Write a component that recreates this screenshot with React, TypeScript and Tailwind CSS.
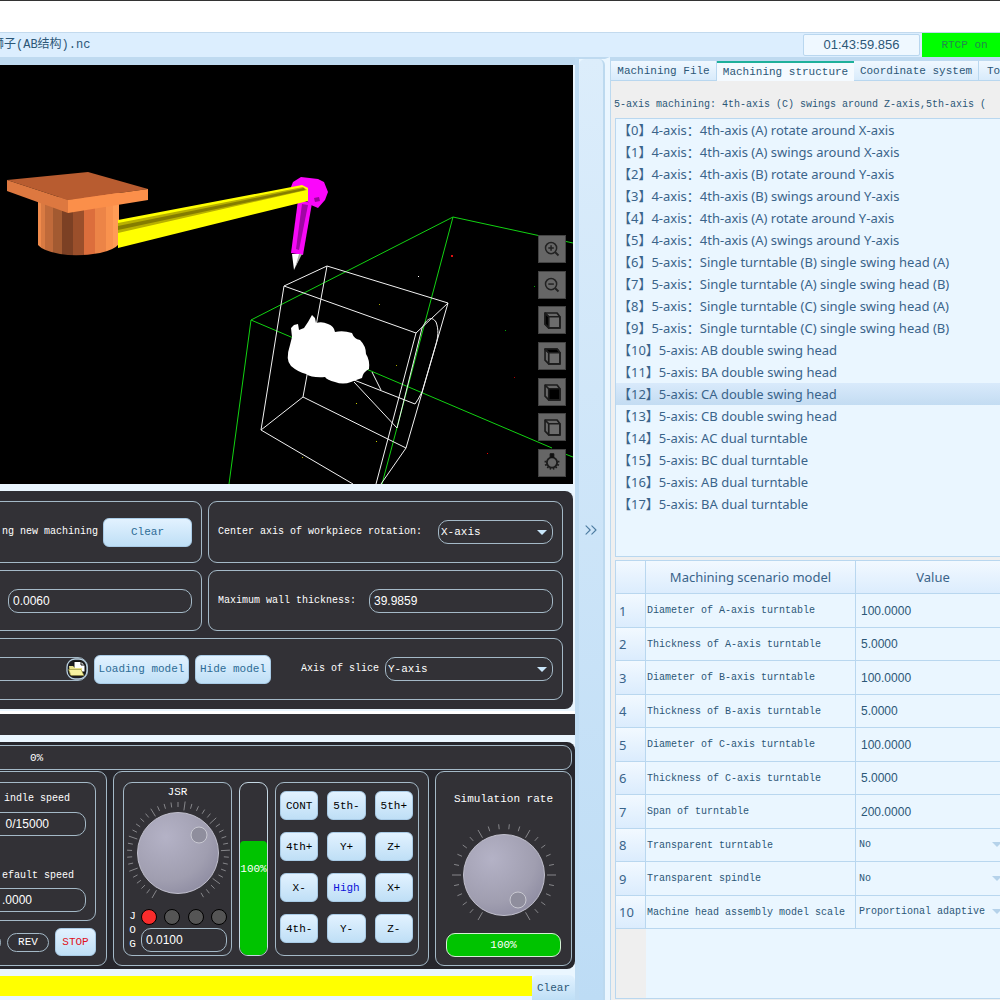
import React from "react";
import { ChevronsRight } from "lucide-react";

const structures = [
  "【0】4-axis：4th-axis (A) rotate around X-axis",
  "【1】4-axis：4th-axis (A) swings around X-axis",
  "【2】4-axis：4th-axis (B) rotate around Y-axis",
  "【3】4-axis：4th-axis (B) swings around Y-axis",
  "【4】4-axis：4th-axis (A) rotate around Y-axis",
  "【5】4-axis：4th-axis (A) swings around Y-axis",
  "【6】5-axis：Single turntable (B) single swing head (A)",
  "【7】5-axis：Single turntable (A) single swing head (B)",
  "【8】5-axis：Single turntable (C) single swing head (A)",
  "【9】5-axis：Single turntable (C) single swing head (B)",
  "【10】5-axis: AB double swing head",
  "【11】5-axis: BA double swing head",
  "【12】5-axis: CA double swing head",
  "【13】5-axis: CB double swing head",
  "【14】5-axis: AC dual turntable",
  "【15】5-axis: BC dual turntable",
  "【16】5-axis: AB dual turntable",
  "【17】5-axis: BA dual turntable",
];

const params: { name: string; value: string; choice?: boolean }[] = [
  { name: "Diameter of A-axis turntable", value: "100.0000" },
  { name: "Thickness of A-axis turntable", value: "5.0000" },
  { name: "Diameter of B-axis turntable", value: "100.0000" },
  { name: "Thickness of B-axis turntable", value: "5.0000" },
  { name: "Diameter of C-axis turntable", value: "100.0000" },
  { name: "Thickness of C-axis turntable", value: "5.0000" },
  { name: "Span of turntable", value: "200.0000" },
  { name: "Transparent turntable", value: "No", choice: true },
  { name: "Transparent spindle", value: "No", choice: true },
  { name: "Machine head assembly model scale", value: "Proportional adaptive", choice: true },
];

const jogKeys = ["CONT", "5th-", "5th+", "4th+", "Y+", "Z+", "X-", "High", "X+", "4th-", "Y-", "Z-"];

function Dial({ steps, handleX, handleY }: { steps: number; handleX: number; handleY: number }) {
  const ticks = Array.from({ length: steps + 1 }, (_, i) => {
    const a = ((240 - (300 / steps) * i) * Math.PI) / 180;
    const major = i % 5 === 0;
    const r1 = major ? 43 : 46;
    const r2 = major ? 52 : 51;
    return (
      <line
        key={i}
        x1={54 + r1 * Math.cos(a)}
        y1={54 - r1 * Math.sin(a)}
        x2={54 + r2 * Math.cos(a)}
        y2={54 - r2 * Math.sin(a)}
        stroke="#86868a"
        strokeWidth="1"
      />
    );
  });
  return (
    <svg viewBox="0 0 108 108" className="h-[108px] w-[108px] shrink-0" aria-hidden="true">
      <defs>
        <radialGradient id={`dial${steps}`} cx="0.35" cy="0.3" r="0.9">
          <stop offset="0" stopColor="#b4b2c6" />
          <stop offset="0.6" stopColor="#a09eb0" />
          <stop offset="1" stopColor="#85839a" />
        </radialGradient>
      </defs>
      {ticks}
      <circle cx="54" cy="54" r="40.5" fill={`url(#dial${steps})`} stroke="#c0bfcc" strokeWidth="1" />
      <circle cx={handleX} cy={handleY} r="8" fill="#8f8e9d" stroke="#c9c9d2" strokeWidth="1" />
    </svg>
  );
}

function Scene() {
  const strips = [
    ["#f08b4c", 38, 41], ["#d97a42", 41, 45], ["#c06a3a", 45, 53], ["#a35a31", 53, 62], ["#7c4024", 62, 73],
    ["#9b4f2b", 73, 84], ["#dc6e3c", 84, 95], ["#ec8447", 95, 106], ["#f9924e", 106, 113], ["#ff9c56", 113, 119],
  ] as const;
  const dots = [
    [418, 276, "#fff"], [379, 304, "#aa0"], [505, 330, "#0a0"], [396, 365, "#aa0"], [356, 403, "#cc0"],
    [376, 441, "#cc0"], [302, 457, "#aa0"], [487, 453, "#e00"], [514, 377, "#a00"], [534, 286, "#0a0"],
  ] as const;
  return (
    <svg viewBox="0 65 573 419" preserveAspectRatio="xMaxYMin slice" className="block h-full w-full" aria-label="Machine preview">
      <g fill="none" stroke="#12d212">
        <path d="M229 484 251 320 453 217 573 243" />
        <path d="M251 320 552 448M565 454 573 457M453 217 382 484" />
      </g>
      <g fill="none" stroke="#f2f2f2">
        <path d="M284 286 327 266 448 303 416 333ZM284 286 261 430 353 484M327 266 303 397 261 430M303 397 406 448 448 303M416 333 376 484M406 448 381 484" />
        <path d="M397 428 422 328C427 318 432 316 436 322C439 330 438 337 436 344L422 392Q418 400 415 404L354 380M372 372 381 390M354 382 397 428" />
      </g>
      <path d="M290 345 292 337 291 328 294 325 298 324 299 330 304 328 308 322 312 315 315 318 316 323Q322 321 328 324Q334 326 335 332Q343 330 352 333Q354 339 360 340Q366 346 366 354Q370 360 369 369Q363 372 362 378Q356 380 351 382Q343 385 335 382Q327 380 325 377Q312 378 306 374Q298 372 291 366Q285 360 290 345Z" fill="#fff" />
      <clipPath id="post"><path d="M38 200V245Q43 251 60 254Q78 257 100 253Q114 250 119 244V190Z" /></clipPath>
      <g clipPath="url(#post)">
        {strips.map(([c, a, b]) => <rect key={a} x={a} y="190" width={b - a} height="68" fill={c} />)}
      </g>
      <path d="M7 180 88 172 148 189 68 200Z" fill="#b85c30" />
      <path d="M7 180 68 200V213L7 191Z" fill="#dd7840" />
      <path d="M68 200 148 189V200L68 213Z" fill="#fb8f4a" />
      <path d="M291 187 293 182 301 177 318 179 324 182 328 192 325 200 318 208 311 205 306 200 296 199Z" fill="#fb06fb" />
      <path d="M298 200 312 203 303 255 291 253Z" fill="#f808f8" />
      <path d="M302 204 308 205 299 250 296 249Z" fill="#a006a4" />
      <path d="M314 198 319 197 320 201 315 202Z" fill="#9a059a" />
      <path d="M292 254H301L294 270Z" fill="#fff" />
      <path d="M299 254H302L295 268Z" fill="#aaa" />
      <path d="M118 220 302 185 308 188V201L118 248Z" fill="#ffff00" />
      <path d="M118 223 303 187 307 190 118 233Z" fill="#b8b000" />
      <path d="M118 226 304 188 305 190 118 230Z" fill="#857d00" />
      {dots.map(([x, y, c]) => <rect key={x} x={x} y={y} width="1" height="1" fill={c} />)}
      <rect x="451" y="255" width="2" height="2" fill="#e01010" />
    </svg>
  );
}

function CubeIcon({ face }: { face: "left" | "top" | "front" | "none" }) {
  return (
    <svg viewBox="0 0 28 28" className="h-full w-full" fill="none" stroke="#1c1c1c" strokeWidth="1.8" strokeLinejoin="round">
      <path d="M6.5 6.5H19.5L22.5 10.5V22.5H10.5L6.5 18.5Z" fill="#686868" />
      {face === "left" && <path d="M6.5 6.5 10.5 10.5V22.5L6.5 18.5Z" fill="#000" />}
      {face === "top" && <path d="M6.5 6.5H19.5L22.5 10.5H10.5Z" fill="#000" />}
      <path d="M10.5 10.5H22.5V22.5H10.5Z" fill={face === "front" ? "#000" : "#6c6c6c"} />
      <path d="M6.5 6.5 10.5 10.5" />
    </svg>
  );
}

function ZoomIcon({ plus }: { plus: boolean }) {
  return (
    <svg viewBox="0 0 28 28" className="h-full w-full" fill="none" stroke="#222" strokeWidth="1.6">
      <circle cx="13" cy="13" r="6" />
      <path d="M17.5 17.5 21 21" strokeWidth="2" />
      <path d={plus ? "M10 13H16M13 10V16" : "M10 13H16"} />
    </svg>
  );
}

function LampIcon() {
  return (
    <svg viewBox="0 0 28 28" className="h-full w-full" fill="none" stroke="#1c1c1c" strokeWidth="2">
      <circle cx="14" cy="13.5" r="5.5" />
      <path d="M6 12.5H8M6.5 16.5 8.5 15.5M9 19.5 10 18M12 21 12.5 19.5M16 21 15.5 19.5M19 19.5 18 18M21.5 16.5 19.5 15.5M22 12.5H20" strokeWidth="1.8" />
      <path d="M12 4H16V8H12Z" fill="#111" stroke="#111" strokeWidth="1" />
    </svg>
  );
}

function FolderIcon() {
  return (
    <svg viewBox="0 0 22 22" className="h-[22px] w-[22px]">
      <rect x="1" y="1" width="20" height="20" rx="8" fill="#1c1c20" stroke="#b9d0e0" strokeWidth="1.3" />
      <path d="M8 3.5H15L19 7V14H8Z" fill="#fff" stroke="#111" />
      <path d="M15 3.5V7H19" fill="none" stroke="#111" />
      <path d="M3 8H7L9 10H16V17H4Z" fill="#e8e08a" />
      <path d="M2.5 11.5H15L18 17.5H5Z" fill="#f7f2a0" stroke="#8a8430" strokeWidth="0.6" />
    </svg>
  );
}

function Caret({ className }: { className: string }) {
  return (
    <svg viewBox="0 0 10 5" className={className} aria-hidden="true">
      <path d="M0 0H10L5 5Z" fill="currentColor" />
    </svg>
  );
}

const box = "rounded-[9px] border border-[#a4b9c7] bg-[#323136]";
const lightButton = "rounded-md border border-[#a9cbe6] bg-linear-to-b from-[#e2f2ff] to-[#bfdff6]";
const field = "rounded-[10px] border border-[#a4b9c7] bg-[#323136] text-white outline-none";
const pill = "h-[19px] w-[42px] shrink-0 rounded-full border border-[#a4b9c7]";
const digits = "font-['Liberation_Sans',sans-serif] text-[12px]";

function DarkSelect({ id, value, className }: { id: string; value: string; className: string }) {
  return (
    <div className={`relative shrink-0 ${className}`}>
      <select id={id} defaultValue={value} className={`block h-6 w-full appearance-none pl-[2px] ${field}`}>
        <option>X-axis</option>
        <option>Y-axis</option>
        <option>Z-axis</option>
      </select>
      <Caret className="pointer-events-none absolute top-[10px] right-[6px] h-[5px] w-[10px] text-[#c9e6fa]" />
    </div>
  );
}

export default function App() {
  return (
    <div className="flex min-h-screen flex-col overflow-hidden bg-[#eaf6ff] font-['Liberation_Mono','Noto_Sans_CJK_SC',monospace] text-[11px] leading-4 whitespace-nowrap text-[#2c5777]">
      <div className="h-8 border-t border-[#333] bg-white" />
      <header className="flex h-[25px] items-center border-t border-[#c3daee] bg-[#dceefe]">
        <div className="-ml-2 flex-1 text-[12px]">狮子(AB结构).nc</div>
        <div className="flex h-[22px] w-[117px] items-center justify-center rounded-xs border border-[#b9d7ef] bg-[#eff8ff] font-['Liberation_Sans',sans-serif] text-[13px]">01:43:59.856</div>
        <button className="-mr-[7px] ml-[2px] h-full w-[85px] bg-[#00ff00] text-[#228a4c]">RTCP on</button>
      </header>

      <div className="flex flex-1">
        <main className="flex min-w-0 flex-1 flex-col">
          <div className="h-2 bg-[#bfdaf0]" />
          <section className="relative mr-[2px] h-[419px] overflow-hidden bg-black">
            <Scene />
            <div className="absolute top-[170px] right-[7px] bottom-[7px] flex w-7 flex-col justify-between">
              {[
                ["Zoom in", <ZoomIcon plus />], ["Zoom out", <ZoomIcon plus={false} />],
                ["Left view", <CubeIcon face="left" />], ["Top view", <CubeIcon face="top" />],
                ["Front view", <CubeIcon face="front" />], ["Isometric view", <CubeIcon face="none" />],
                ["Light", <LampIcon />],
              ].map(([label, icon]) => (
                <button key={label as string} aria-label={label as string} className="h-7 w-7 border border-[#444] bg-[#666]">
                  {icon}
                </button>
              ))}
            </div>
          </section>

          <section className="mt-[7px] mr-[2px] grid grid-cols-[202px_minmax(0,1fr)] gap-x-[6px] gap-y-[7px] rounded-r-lg bg-[#2f2e34] pt-[10px] pr-[10px] pb-[9px] text-white">
            <div className={`-ml-3 flex h-[62px] items-center justify-end gap-[5px] pr-[9px] ${box}`}>
              <span className="text-[10px]">ng new machining</span>
              <button className={`h-[29px] w-[89px] text-[#2d6c96] ${lightButton}`}>Clear</button>
            </div>
            <div className={`flex h-[62px] items-center px-[9px] ${box}`}>
              <label htmlFor="rotation" className="flex-1 text-[10px]">Center axis of workpiece rotation:</label>
              <DarkSelect id="rotation" value="X-axis" className="w-[115px]" />
            </div>
            <div className={`-ml-3 flex h-[61px] items-center justify-end pr-[9px] ${box}`}>
              <input aria-label="Precision" defaultValue="0.0060" className={`h-6 w-[184px] px-1 ${digits} ${field}`} />
            </div>
            <div className={`flex h-[61px] items-center justify-between px-[9px] ${box}`}>
              <label htmlFor="wall" className="text-[10px]">Maximum wall thickness:</label>
              <input id="wall" defaultValue="39.9859" className={`h-6 w-[184px] px-1 ${digits} ${field}`} />
            </div>
            <div className={`col-span-2 -ml-3 flex h-[62px] items-center gap-[6px] pr-[9px] ${box}`}>
              <div className="relative w-[99px]">
                <input aria-label="Model file" className={`block h-6 w-full ${field}`} />
                <button aria-label="Open file" className="absolute top-px right-0 h-[22px] w-[22px]"><FolderIcon /></button>
              </div>
              <button className={`h-[29px] w-[95px] text-[#2d6c96] ${lightButton}`}>Loading model</button>
              <button className={`h-[29px] w-[76px] text-[#2d6c96] ${lightButton}`}>Hide model</button>
              <label htmlFor="slice" className="ml-auto text-[10px]">Axis of slice</label>
              <DarkSelect id="slice" value="Y-axis" className="w-[168px]" />
            </div>
          </section>

          <div className="mt-[2px] mb-[7px] h-[24px] border-t-[3px] border-white bg-[#323136]" />

          <section className="rounded-r-lg bg-[#26262c] pt-[3px] pr-[3px] pb-[3px] text-white">
            <div className={`-ml-3 flex h-[25px] items-center pl-[41px] ${box}`}>0%</div>
            <div className="mt-px flex gap-[6px]">
              <div className={`-ml-3 w-[119px] pt-[10px] pr-[10px] pb-[9px] ${box}`}>
                <div className={`h-[139px] pr-[9px] text-right ${box}`}>
                  <label htmlFor="spindle" className="mt-2 block pr-4 text-[10px]">indle speed</label>
                  <input id="spindle" readOnly defaultValue="0/15000" className={`mt-[5px] block h-6 w-full pr-9 text-right ${digits} ${field}`} />
                  <label htmlFor="default" className="mt-8 block pr-[12px] text-[10px]">efault speed</label>
                  <input id="default" defaultValue=".0000" className={`mt-1 block h-6 w-full pr-[53px] text-right ${digits} ${field}`} />
                </div>
                <div className="mt-[7px] flex items-center justify-end gap-[6px]">
                  <button aria-label="Forward" className={pill} />
                  <button className={pill}>REV</button>
                  <button className={`h-7 w-[41px] shrink-0 text-[#e01020] ${lightButton}`}>STOP</button>
                </div>
              </div>

              <div className={`flex flex-1 justify-between px-[9px] pt-[10px] pb-[9px] ${box}`}>
                <div className={`flex h-[174px] w-[109px] flex-col items-center ${box}`}>
                  <div className="mt-px h-4">JSR</div>
                  <div className="-mt-px"><Dial steps={38} handleX={75} handleY={36} /></div>
                  <div className="flex w-full flex-1 gap-1 px-1 pt-[2px]">
                    <div className="flex w-[9px] flex-col items-center leading-[14px]"><span>J</span><span>O</span><span>G</span></div>
                    <div className="flex w-[86px] flex-col gap-[3px]">
                      <div className="flex justify-between">
                        <i className="h-4 w-4 rounded-full border border-black bg-[#f92c2c]" />
                        <i className="h-4 w-4 rounded-full border border-black bg-[#555]" />
                        <i className="h-4 w-4 rounded-full border border-black bg-[#555]" />
                        <i className="h-4 w-4 rounded-full border border-black bg-[#555]" />
                      </div>
                      <input aria-label="Jog step" defaultValue="0.0100" className={`h-6 w-full px-1 ${digits} ${field}`} />
                    </div>
                  </div>
                </div>
                <div className="relative flex h-[174px] w-[29px] flex-col justify-end overflow-hidden rounded-[9px] border border-[#c5d8e4]">
                  <div className="h-[66%] rounded-t-sm bg-[#00c300]" />
                  <span className="absolute inset-0 flex items-center justify-center">100%</span>
                </div>
                <div className={`grid h-[174px] w-[144px] grid-cols-3 content-start gap-x-[9px] gap-y-3 pt-2 pr-[5px] pl-1 ${box}`}>
                  {jogKeys.map((k) => (
                    <button key={k} className={`h-[29px] ${k === "High" ? "text-[#0d12d8]" : "text-black"} ${lightButton}`}>{k}</button>
                  ))}
                </div>
              </div>

              <div className={`flex w-[137px] flex-col items-center ${box}`}>
                <div className="mt-[19px] mb-[14px] h-4">Simulation rate</div>
                <Dial steps={25} handleX={68} handleY={79} />
                <div className="mt-1 flex h-6 w-[115px] items-center justify-center rounded-[9px] border border-[#d5f0d5] bg-[#00c300]">100%</div>
              </div>
            </div>
          </section>

          <div className="mt-[6px] flex items-stretch">
            <div className="my-px h-5 flex-1 bg-[#ffff00]" />
            <button className="h-[25px] w-[43px] rounded-t-md bg-linear-to-b from-[#e2f2ff] to-[#bfdff6]">Clear</button>
          </div>
        </main>

        <aside className="flex w-[35px] flex-col border-t-2 border-r-[5px] border-l-4 border-t-[#bfdaf0] border-r-[#eaf6ff] border-l-[#bfdcf3]">
          <button aria-label="Collapse panel" className="flex flex-1 items-center justify-center rounded-t-md border-r-2 border-[#bcd9ef] bg-linear-to-b from-[#dcedfb] to-[#bddcf5]">
            <ChevronsRight className="h-5 w-5 text-[#4c7ba0]" strokeWidth={1.3} />
          </button>
        </aside>

        <section className="flex w-[390px] flex-col overflow-hidden border-t-4 border-l border-t-[#bfdaf0] border-l-[#bcd9ef] bg-[#efefef]">
          <div className="flex h-5 w-[430px]" role="tablist">
            <button role="tab" className="w-[106px] border-r border-b border-[#b9d7ef] bg-linear-to-b from-[#f0f8ff] to-[#d8ebfb]">Machining File</button>
            <button role="tab" aria-selected="true" className="w-[137px] border-t-2 border-[#1eb09b] bg-[#f4faff]">Machining structure</button>
            <button role="tab" className="w-[125px] border-r border-b border-[#b9d7ef] bg-linear-to-b from-[#f0f8ff] to-[#d8ebfb]">Coordinate system</button>
            <button role="tab" className="flex-1 border-b border-[#b9d7ef] bg-linear-to-b from-[#f0f8ff] to-[#d8ebfb] pl-2 text-left">Tool</button>
          </div>
          <p className="mt-4 mb-[5px] pl-[3px] text-[10px]">5-axis machining: 4th-axis (C) swings around Z-axis,5th-axis (</p>
          <ul className="ml-1 h-[439px] w-[400px] border border-[#b9d7ef] bg-[#eaf6ff] font-['Noto_Sans','Noto_Sans_CJK_SC',sans-serif] text-[13px] leading-[22px] text-[#3a648a]">
            {structures.map((s, i) => (
              <li key={s} className={`h-[22px] pl-[2px] ${i === 12 ? "bg-linear-to-b from-[#d9eafb] to-[#c3dcf2]" : ""}`}>{s}</li>
            ))}
          </ul>
          <div className="mt-[3px] mb-px ml-1 flex w-[400px] flex-1 flex-col border border-[#b9d7ef] bg-[#eaf6ff]">
            <table className="w-full table-fixed border-separate border-spacing-0 text-left">
              <colgroup><col className="w-[30px]" /><col className="w-[210px]" /><col /></colgroup>
              <thead className="bg-linear-to-b from-[#f2f9ff] to-[#dbecfd] font-['Noto_Sans',sans-serif] text-[13px] text-[#3a648a]">
                <tr className="h-[33px]">
                  <th className="border-r border-b border-[#b9d7ef]" aria-label="Row" />
                  <th className="border-r border-b border-[#b9d7ef] text-center font-normal">Machining scenario model</th>
                  <th className="border-b border-[#b9d7ef] pr-1 text-center font-normal">Value</th>
                </tr>
              </thead>
              <tbody>
                {params.map((p, i) => (
                  <tr key={p.name} className="odd:h-[34px] even:h-[33px]">
                    <th className="border-r border-b border-[#b9d7ef] bg-linear-to-b from-[#f2f9ff] to-[#dbecfd] pl-[3px] font-['Noto_Sans',sans-serif] text-[13px] font-normal text-[#3a648a]">{i + 1}</th>
                    <td className="overflow-hidden border-r border-b border-[#b9d7ef] pt-px pl-px text-[10px]">{p.name}</td>
                    <td className="border-b border-[#b9d7ef]">
                      {p.choice ? (
                        <div className="relative w-[148px]">
                          <select aria-label={p.name} defaultValue={p.value} className="block w-full appearance-none bg-transparent pl-[3px] text-[10px] outline-none">
                            <option>{p.value}</option>
                            <option>Yes</option>
                          </select>
                          <Caret className="pointer-events-none absolute top-[5px] right-[2px] h-[5px] w-[10px] text-[#b5d2ea]" />
                        </div>
                      ) : (
                        <input aria-label={p.name} defaultValue={p.value} className={`block w-[140px] bg-transparent pl-[5px] outline-none ${digits}`} />
                      )}
                    </td>
                  </tr>
                ))}
              </tbody>
            </table>
            <div className="w-[30px] flex-1 bg-[#efefef]" />
          </div>
        </section>
      </div>
    </div>
  );
}
